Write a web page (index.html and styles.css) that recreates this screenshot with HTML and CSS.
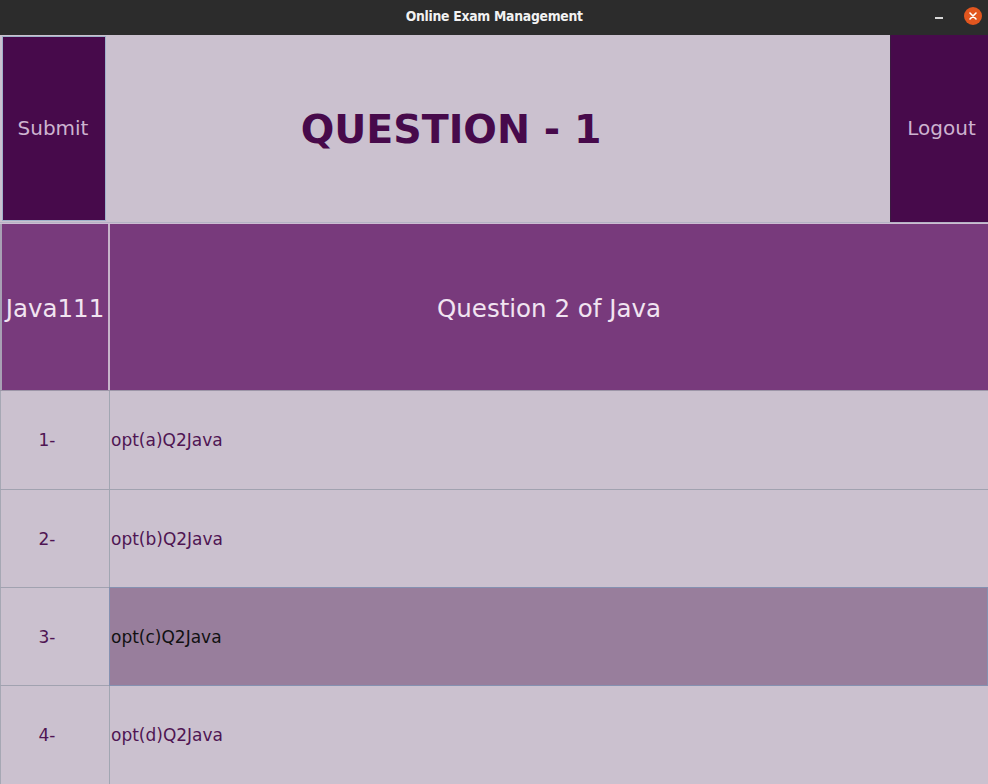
FILE: index.html
```html
<!DOCTYPE html>
<html>
<head>
<meta charset="utf-8">
<title>Online Exam Management</title>
<link rel="stylesheet" href="styles.css">
</head>
<body>
<div class="window">
  <div class="titlebar">
    <div class="title">Online Exam Management</div>
    <div class="controls">
      <span class="minimize"></span>
      <span class="close">
        <svg width="18" height="18" viewBox="0 0 18 18">
          <circle cx="9" cy="9" r="9" fill="#e2561f"/>
          <path d="M6 6 L12 12 M12 6 L6 12" stroke="#fff" stroke-width="1.6" stroke-linecap="round"/>
        </svg>
      </span>
    </div>
  </div>

  <div class="header">
    <button class="btn btn-submit">Submit</button>
    <div class="heading">QUESTION - 1</div>
    <button class="btn btn-logout">Logout</button>
  </div>

  <div class="question-row">
    <div class="subject">Java111</div>
    <div class="question">Question 2 of Java</div>
  </div>

  <div class="options">
    <div class="opt-row">
      <div class="opt-num">1-</div>
      <div class="opt-text">opt(a)Q2Java</div>
    </div>
    <div class="opt-row">
      <div class="opt-num">2-</div>
      <div class="opt-text">opt(b)Q2Java</div>
    </div>
    <div class="opt-row">
      <div class="opt-num">3-</div>
      <div class="opt-text selected">opt(c)Q2Java</div>
    </div>
    <div class="opt-row">
      <div class="opt-num">4-</div>
      <div class="opt-text">opt(d)Q2Java</div>
    </div>
  </div>
</div>
</body>
</html>
```

FILE: styles.css
```css
* {
  box-sizing: border-box;
}

html, body {
  margin: 0;
  padding: 0;
  background: #cbc1cf;
}

body {
  font-family: "DejaVu Sans", "Noto Sans", sans-serif;
  width: 988px;
  height: 784px;
  overflow: hidden;
}

.window {
  display: flex;
  flex-direction: column;
  width: 988px;
  height: 784px;
}

.titlebar {
  height: 35px;
  background: #2c2c2c;
  display: flex;
  align-items: center;
  justify-content: center;
  position: relative;
  flex: none;
}

.title {
  color: #f2f2f2;
  font-family: "DejaVu Sans", sans-serif;
  font-weight: bold;
  font-size: 13.5px;
  letter-spacing: -0.3px;
  transform: scaleX(0.92);
  margin-top: -3px;
}

.controls {
  position: absolute;
  right: 6px;
  top: 7px;
  display: flex;
  align-items: center;
  gap: 21px;
}

.minimize {
  display: block;
  width: 8px;
  height: 2px;
  background: #d8d8d8;
  margin-top: 4px;
}

.close {
  display: block;
  width: 18px;
  height: 18px;
}

.close svg {
  display: block;
}

.header {
  height: 188px;
  display: flex;
  background: #cbc1cf;
  border-bottom: 1px solid #b4b2c4;
  flex: none;
}

.btn {
  font-family: "DejaVu Sans", sans-serif;
  font-size: 20px;
  color: #cdb3d0;
  background: #470a4b;
  padding: 0;
  margin: 0;
  cursor: pointer;
}

.btn-submit {
  width: 104px;
  margin: 1px 0 1px 2px;
  border: 1.5px solid #9fb1c9;
  padding-right: 2px;
  padding-bottom: 1px;
}

.btn-logout {
  width: 98px;
  margin-left: auto;
  border: none;
  border-left: 1px solid #3a1a40;
  padding-left: 4px;
  padding-bottom: 1px;
}

.heading {
  flex: 1;
  display: flex;
  align-items: center;
  justify-content: center;
  font-weight: bold;
  font-size: 39.5px;
  color: #470a4b;
  padding-right: 94px;
}

.question-row {
  height: 168px;
  display: grid;
  grid-template-columns: 110px 1fr;
  background: #783a7c;
  border-top: 1px solid #cdbdd2;
  border-bottom: 1px solid #9d96a8;
  flex: none;
}

.subject {
  display: flex;
  align-items: center;
  justify-content: center;
  color: #f1e4f1;
  font-size: 24.5px;
  border-left: 2px solid #a8a0b4;
  border-right: 2px solid #c7b4ca;
  padding-top: 2px;
}

.question {
  display: flex;
  align-items: center;
  justify-content: center;
  color: #f1e4f1;
  font-size: 24.5px;
  padding-top: 2px;
}

.options {
  flex: 1;
  display: grid;
  grid-template-rows: 99px 98px 98px 98px;
}

.opt-row {
  display: grid;
  grid-template-columns: 110px 1fr;
  border-bottom: 1px solid #a1a2b0;
}

.opt-row:last-child {
  border-bottom: none;
}

.opt-num {
  display: flex;
  align-items: center;
  justify-content: center;
  font-size: 17px;
  color: #4f1553;
  border-left: 1px solid #a6a8b4;
  border-right: 1px solid #a1a6b2;
  padding-right: 16px;
}

.opt-text {
  display: flex;
  align-items: center;
  font-size: 17px;
  color: #4f1553;
  padding-left: 1px;
}

.opt-text.selected {
  background: #987e9c;
  color: #111;
  border: 1px solid #8591b1;
  margin: -1px 0 -1px -1px;
  padding-left: 1px;
}
```
